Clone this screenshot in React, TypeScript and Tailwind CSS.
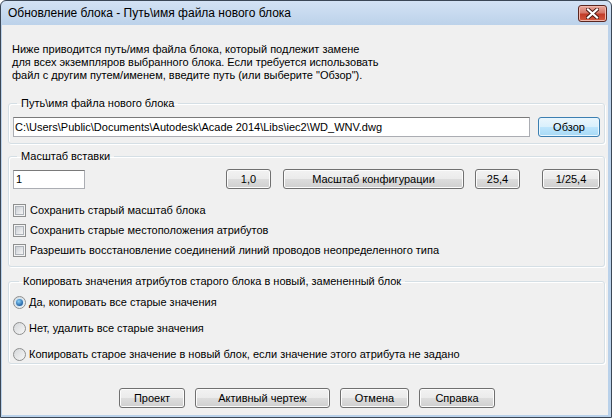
import React from "react";

const font = "font-['Liberation_Sans',Arial,sans-serif]";

function Btn({ className, children, def }: { className: string; children: React.ReactNode; def?: boolean }) {
  return (
    <div
      className={
        "flex items-center justify-center rounded-[3px] border text-[11px] text-black " +
        (def
          ? "border-[#3c7fb1] bg-[linear-gradient(#eaf6fd,#d9f0fc_50%,#bee6fd_50%,#a7d9f5)] shadow-[inset_0_0_0_1px_#e8f6fe] "
          : "border-[#707070] bg-[linear-gradient(#f2f2f2,#ebebeb_50%,#dddddd_50%,#cfcfcf)] shadow-[inset_0_0_0_1px_#fcfcfc] ") +
        className
      }
    >
      {children}
    </div>
  );
}

function Check({ label }: { label: string }) {
  return (
    <div className="flex h-[20px] items-center">
      <div className="h-[13px] w-[13px] border border-[#8e8f8f] bg-[#f4f4f4] p-[1px]">
        <div className="h-full w-full border border-[#aeb3b9] bg-[linear-gradient(135deg,#cbcfd5,#f6f6f6)]" />
      </div>
      <span className="ml-[4px]">{label}</span>
    </div>
  );
}

function Radio({ label, on }: { label: string; on?: boolean }) {
  return (
    <div className="flex h-[18px] items-center">
      <div className="flex h-[13px] w-[13px] items-center justify-center rounded-full border border-[#8e8f8f] bg-[linear-gradient(135deg,#d4d6d9,#f7f7f7)]">
        {on ? (
          <div className="h-[7px] w-[7px] rounded-full bg-[radial-gradient(circle_at_40%_35%,#8ad1f9,#1d5b9f_75%)] shadow-[0_0_0_1px_#cde6f6]" />
        ) : null}
      </div>
      <span className="ml-[3px]">{label}</span>
    </div>
  );
}

export default function App() {
  return (
    <div className={"relative h-[418px] w-[612px] overflow-hidden bg-white " + font}>
      <div className="flex h-[418px] w-[612px] flex-col overflow-hidden rounded-t-[6px] border border-[#3b4756] bg-[linear-gradient(#d3e2f4,#bcd2ea_24px,#b9d1ea)]">
        {/* title bar */}
        <div className="flex h-[24px] shrink-0 items-start justify-between">
          <div className="ml-[7px] mt-[5px] text-[12px] leading-[14px] text-black">Обновление блока - Путь\имя файла нового блока</div>
          <div className="mr-[4px] mt-[4px] flex h-[17px] w-[29px] items-center justify-center rounded-[3px] border border-[#5a2620] bg-[linear-gradient(#e8a89c,#d6786a_45%,#c23b28_55%,#d55a3f)] shadow-[inset_0_0_0_1px_#f0b8ad]">
            <svg width="13" height="11" viewBox="0 0 13 11">
              <path d="M2 1.5 L11 9.5 M11 1.5 L2 9.5" stroke="#4b1a14" strokeWidth="4" strokeLinecap="square" />
              <path d="M2 1.5 L11 9.5 M11 1.5 L2 9.5" stroke="#ffffff" strokeWidth="2.2" strokeLinecap="square" />
            </svg>
          </div>
        </div>
        {/* client */}
        <div className="mb-[2px] ml-[1px] mr-[3px] flex flex-1 flex-col bg-[#f0f0f0] pl-[6px] pr-[3px] text-[11px] leading-[13px] text-black">
          <div className="mt-[18px] pl-[4px]">
            <div>Ниже приводится путь/имя файла блока, который подлежит замене</div>
            <div>для всех экземпляров выбранного блока. Если требуется использовать</div>
            <div>файл с другим путем/именем, введите путь (или выберите "Обзор").</div>
          </div>

          <fieldset className="mt-[15px] rounded-[3px] border border-[#d5dfe5] px-[4px] pb-[6px] shadow-[inset_1px_1px_0_#fff,1px_1px_0_#fff]">
            <legend className="ml-[4px] px-[4px] leading-[13px]">Путь\имя файла нового блока</legend>
            <div className="mt-[7px] flex items-center">
              <div className="flex h-[20px] w-[517px] items-center border border-[#abadb3] border-t-[#7a7a7a] bg-white pl-[1px]">
                {"C:\\Users\\Public\\Documents\\Autodesk\\Acade 2014\\Libs\\iec2\\WD_WNV.dwg"}
              </div>
              <Btn def className="ml-[8px] h-[20px] w-[62px]">Обзор</Btn>
            </div>
          </fieldset>

          <fieldset className="mt-[6px] rounded-[3px] border border-[#d5dfe5] px-[4px] pb-[6px] shadow-[inset_1px_1px_0_#fff,1px_1px_0_#fff]">
            <legend className="ml-[4px] px-[4px] leading-[13px]">Масштаб вставки</legend>
            <div className="mt-[6px] flex items-center">
              <div className="flex h-[19px] w-[72px] items-center border border-[#abadb3] border-t-[#7a7a7a] bg-white pl-[2px]">1</div>
              <Btn className="ml-[141px] h-[20px] w-[45px]">1,0</Btn>
              <Btn className="ml-[12px] h-[20px] w-[181px]">Масштаб конфигурации</Btn>
              <Btn className="ml-[11px] h-[20px] w-[45px]">25,4</Btn>
              <Btn className="ml-[22px] h-[20px] w-[58px]">1/25,4</Btn>
            </div>
            <div className="mt-[11px] flex flex-col">
              <Check label="Сохранить старый масштаб блока" />
              <Check label="Сохранить старые местоположения атрибутов" />
              <Check label="Разрешить восстановление соединений линий проводов неопределенного типа" />
            </div>
          </fieldset>

          <fieldset className="mt-[8px] rounded-[3px] border border-[#d5dfe5] px-[4px] pb-[0px] shadow-[inset_1px_1px_0_#fff,1px_1px_0_#fff]">
            <legend className="ml-[6px] px-[4px] leading-[13px]">Копировать значения атрибутов старого блока в новый, замененный блок</legend>
            <div className="mt-[5px] flex flex-col gap-[8px]">
              <Radio on label="Да, копировать все старые значения" />
              <Radio label="Нет, удалить все старые значения" />
              <Radio label="Копировать старое значение в новый блок, если значение этого атрибута не задано" />
            </div>
          </fieldset>

          <div className="mt-[24px] flex items-center">
            <Btn className="ml-[111px] h-[20px] w-[66px]">Проект</Btn>
            <Btn className="ml-[10px] h-[20px] w-[135px]">Активный чертеж</Btn>
            <Btn className="ml-[10px] h-[20px] w-[69px]">Отмена</Btn>
            <Btn className="ml-[10px] h-[20px] w-[76px]">Справка</Btn>
          </div>
        </div>
      </div>
    </div>
  );
}
